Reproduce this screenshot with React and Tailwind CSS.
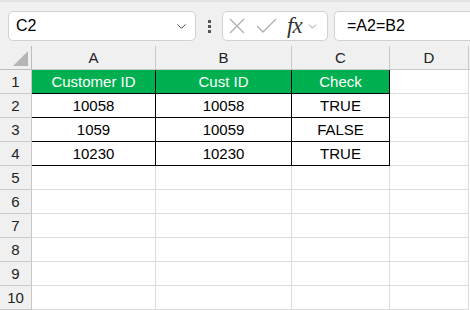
import { ChevronDown } from 'lucide-react';

const cols = ['A', 'B', 'C', 'D'];

const rows = [
  { n: 1, cells: ['Customer ID', 'Cust ID', 'Check'], head: true },
  { n: 2, cells: ['10058', '10058', 'TRUE'] },
  { n: 3, cells: ['1059', '10059', 'FALSE'] },
  { n: 4, cells: ['10230', '10230', 'TRUE'] },
  { n: 5 },
  { n: 6 },
  { n: 7 },
  { n: 8 },
  { n: 9 },
  { n: 10 },
];

const gridCols = 'grid grid-cols-[32px_124px_136px_98px_79px_1fr]';

const Toolbar = () => (
  <div className="h-[46px] flex items-start pt-[9px] pl-[8px] border-t-[2px] border-[#e2e2e2]">
    {/* name box */}
    <div className="w-[188px] h-[30px] bg-white border border-[#d1d1d1] rounded-[5px] flex items-center pl-[7px] pr-[6px]">
      <span className="flex-1 text-[16px] text-black">C2</span>
      <ChevronDown size={15} strokeWidth={1.6} className="text-[#444]" />
    </div>
    <div className="w-[26px] h-[30px] flex flex-col items-center justify-center gap-[2px]">
      <span className="w-[3px] h-[3px] bg-[#555]" />
      <span className="w-[3px] h-[3px] bg-[#555]" />
      <span className="w-[3px] h-[3px] bg-[#555]" />
    </div>
    {/* cancel / enter / fx */}
    <div className="w-[106px] h-[30px] bg-white border border-[#d1d1d1] rounded-[5px] flex items-center pl-[5px]">
      <svg width="18" height="18" viewBox="0 0 18 18" className="shrink-0">
        <path d="M2 2 L16 16 M16 2 L2 16" stroke="#b0b0b0" strokeWidth="1.3" fill="none" />
      </svg>
      <svg width="22" height="18" viewBox="0 0 22 18" className="ml-[10px] shrink-0">
        <path d="M1 9 L7 15 L20 2" stroke="#b0b0b0" strokeWidth="1.3" fill="none" />
      </svg>
      <span className="ml-[9px] text-[23px] leading-none italic text-[#333] font-['Liberation_Serif',serif] tracking-[-1px] mt-[-2px]">fx</span>
      <ChevronDown size={13} strokeWidth={1.5} className="ml-[4px] text-[#888]" />
    </div>
    {/* formula bar */}
    <div className="ml-[6px] flex-1 h-[30px] bg-white border border-[#d1d1d1] border-r-0 rounded-l-[5px] flex items-center pl-[12px]">
      <span className="text-[16px] text-black">=A2=B2</span>
    </div>
  </div>
);

const App = () => {
  return (
    <div className="w-[470px] h-[310px] overflow-hidden bg-[#f0f0f0] font-['Liberation_Sans',Arial,sans-serif]">
      <Toolbar />

      {/* column headers */}
      <div className={`${gridCols} h-[24px] text-[15px] text-[#222]`}>
        <div className="relative border-r border-b border-[#bdbdbd]">
          <div className="absolute left-[13px] top-[5px] w-0 h-0 border-l-[15px] border-l-transparent border-b-[15px] border-b-[#b5b5b5]" />
        </div>
        {cols.map((c) => (
          <div key={c} className="border-r border-b border-[#c8c8c8] flex items-center justify-center leading-[23px]">
            {c}
          </div>
        ))}
        <div className="border-b border-[#c8c8c8]" />
      </div>

      {rows.map((r) => (
        <div key={r.n} className={`${gridCols} h-[24px] text-[15px] leading-[23px]`}>
          <div className="bg-[#f0f0f0] border-r border-b border-[#c8c8c8] text-center text-[#222]">
            {r.n}
          </div>
          {[0, 1, 2].map((i) =>
            r.cells ? (
              <div
                key={i}
                className={`border-r border-b border-black text-center ${
                  r.head ? 'bg-[#00b050] text-white' : 'bg-white text-black'
                }`}
              >
                {r.cells[i]}
              </div>
            ) : (
              <div key={i} className="bg-white border-r border-b border-[#dcdcdc]" />
            )
          )}
          <div className="bg-white border-r border-b border-[#dcdcdc]" />
          <div className="bg-white" />
        </div>
      ))}
    </div>
  );
};

export default App;
